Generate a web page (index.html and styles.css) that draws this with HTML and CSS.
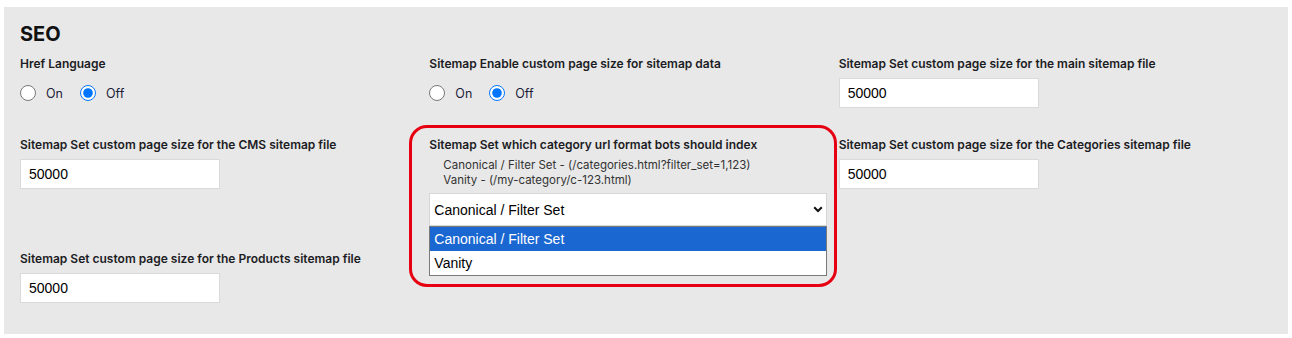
FILE: index.html
```html
<!DOCTYPE html>
<html lang="en">
<head>
    <meta charset="UTF-8">
    <meta name="viewport" content="width=device-width, initial-scale=1.0">
    <title>SEO settings</title>
    <link rel="stylesheet" href="styles.css">
</head>
<body>
    <section class="panel">
        <h2 class="panel-title">SEO</h2>

        <div class="settings-grid">
            <div class="field">
                <label class="field-label">Href Language</label>
                <div class="radio-group">
                    <label class="radio"><input type="radio" name="href_lang"> On</label>
                    <label class="radio"><input type="radio" name="href_lang" checked> Off</label>
                </div>
            </div>

            <div class="field">
                <label class="field-label">Sitemap Enable custom page size for sitemap data</label>
                <div class="radio-group">
                    <label class="radio"><input type="radio" name="sitemap_custom"> On</label>
                    <label class="radio"><input type="radio" name="sitemap_custom" checked> Off</label>
                </div>
            </div>

            <div class="field">
                <label class="field-label">Sitemap Set custom page size for the main sitemap file</label>
                <input class="text-input" type="text" value="50000">
            </div>

            <div class="field">
                <label class="field-label">Sitemap Set custom page size for the CMS sitemap file</label>
                <input class="text-input" type="text" value="50000">
            </div>

            <div class="field field-highlight">
                <label class="field-label">Sitemap Set which category url format bots should index</label>
                <div class="field-help">
                    Canonical / Filter Set - (/categories.html?filter_set=1,123)<br>
                    Vanity - (/my-category/c-123.html)
                </div>
                <div class="select-wrap">
                    <select class="select-input">
                        <option selected>Canonical / Filter Set</option>
                        <option>Vanity</option>
                    </select>
                    <svg class="select-arrow" width="10" height="7" viewBox="0 0 10 7">
                        <path d="M1.2 1.2 L5 5 L8.8 1.2" fill="none" stroke="#111" stroke-width="2"/>
                    </svg>
                    <ul class="select-options">
                        <li class="option active">Canonical / Filter Set</li>
                        <li class="option">Vanity</li>
                    </ul>
                </div>
                <div class="highlight-ring"></div>
            </div>

            <div class="field">
                <label class="field-label">Sitemap Set custom page size for the Categories sitemap file</label>
                <input class="text-input" type="text" value="50000">
            </div>

            <div class="field">
                <label class="field-label">Sitemap Set custom page size for the Products sitemap file</label>
                <input class="text-input" type="text" value="50000">
            </div>
        </div>
    </section>
</body>
</html>
```

FILE: styles.css
```css
:root {
    --panel-bg: #e8e8e8;
    --text-color: #1c1c24;
    --help-color: #333;
    --input-border: #dadada;
    --option-blue: #1a67d2;
    --ring-red: #e60012;
}

* {
    margin: 0;
    padding: 0;
    box-sizing: border-box;
}

body {
    font-family: Inter, "Noto Sans", sans-serif;
    background: #fff;
    color: var(--text-color);
    padding: 7px 4px 4px 4px;
}

.panel {
    background: var(--panel-bg);
    height: 327px;
    padding: 15px 40px 0 16px;
}

.panel-title {
    font-size: 20px;
    line-height: 24px;
    font-weight: 700;
    color: #111;
    margin-bottom: 10px;
}

.settings-grid {
    display: grid;
    grid-template-columns: repeat(3, 1fr);
    row-gap: 25px;
    align-items: start;
}

.field {
    position: relative;
}

.field-label {
    display: block;
    font-size: 12px;
    line-height: 16px;
    font-weight: 600;
    margin-bottom: 6px;
}

.radio-group {
    display: flex;
    align-items: center;
    gap: 17px;
    height: 20px;
    margin-top: 11px;
}

.radio {
    display: flex;
    align-items: center;
    gap: 10px;
    font-size: 12.5px;
    color: #1e1e3a;
}

.radio input {
    width: 16px;
    height: 16px;
    margin: 0;
}

.text-input {
    display: block;
    width: 200px;
    height: 30px;
    border: 1px solid var(--input-border);
    background: #fff;
    padding: 0 8px;
    font-family: "Liberation Sans", Arial, sans-serif;
    font-size: 14px;
    color: #000;
    margin-bottom: 4px;
}

.field-help {
    padding-left: 14px;
    margin-top: -1px;
    font-size: 11.5px;
    line-height: 14.5px;
    color: var(--help-color);
}

.select-wrap {
    position: relative;
    width: 398px;
    margin-top: 6px;
}

.select-input {
    display: block;
    width: 100%;
    height: 33px;
    appearance: none;
    border: 1px solid #d6d6d6;
    background: #fff;
    padding: 0 4px;
    font-family: "Liberation Sans", Arial, sans-serif;
    font-size: 14px;
    color: #000;
}

.select-arrow {
    position: absolute;
    right: 4px;
    top: 13px;
}

.select-options {
    position: absolute;
    top: 100%;
    left: 0;
    right: 0;
    list-style: none;
    background: #fff;
    border: 1px solid #7a7a7a;
    font-family: "Liberation Sans", Arial, sans-serif;
    font-size: 14px;
    z-index: 5;
}

.option {
    height: 24px;
    line-height: 24px;
    padding-left: 4px;
    color: #000;
}

.option.active {
    background: var(--option-blue);
    color: #fff;
}

.highlight-ring {
    position: absolute;
    top: -12px;
    left: -20px;
    width: 428px;
    height: 162px;
    border: 3px solid var(--ring-red);
    border-radius: 18px;
    pointer-events: none;
    z-index: 6;
}
```
